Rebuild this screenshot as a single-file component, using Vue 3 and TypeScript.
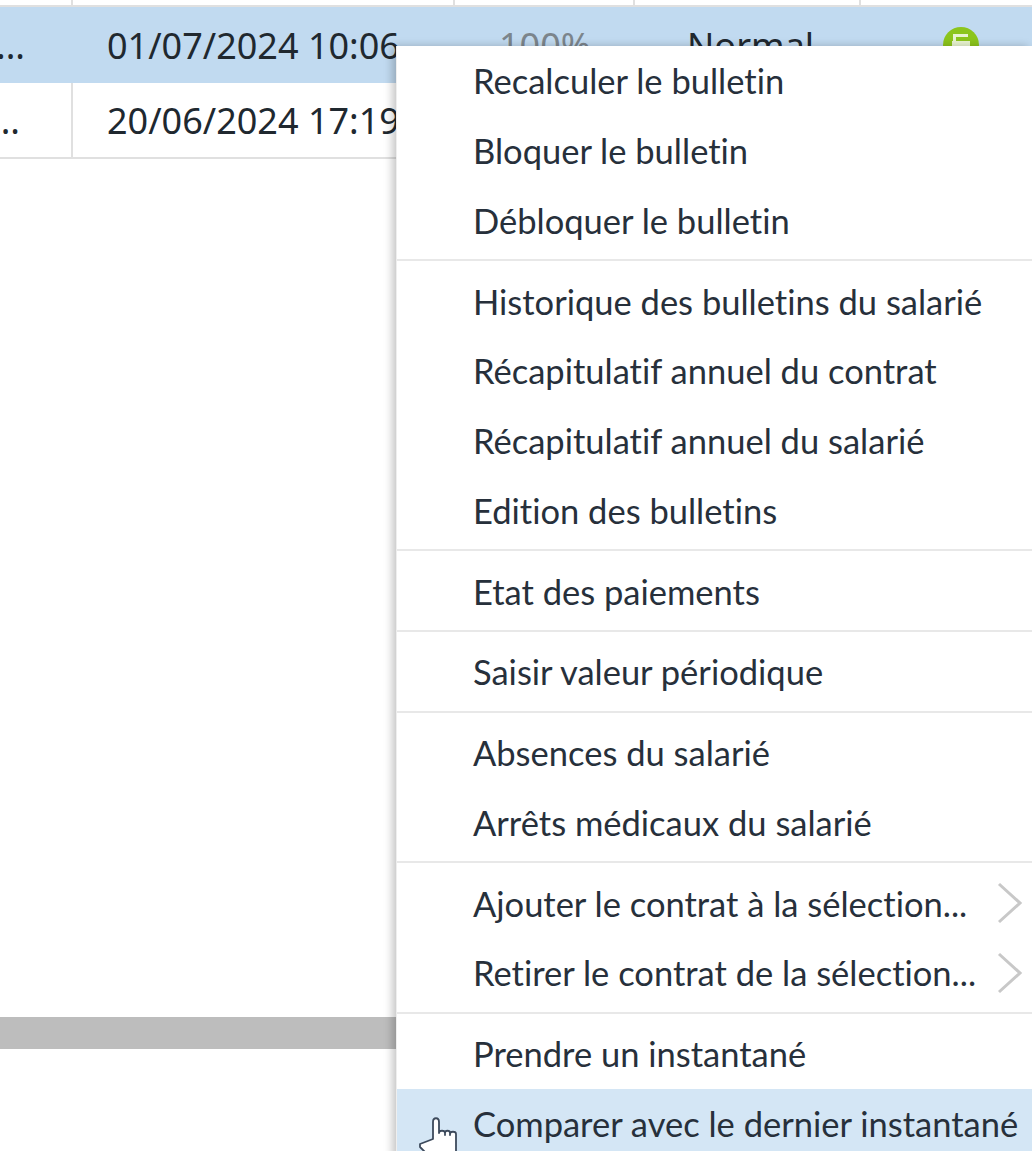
<template>
  <div class="page">
    <div class="table">
      <div class="row top">
        <div class="cell c1"></div>
        <div class="cell c2"></div>
        <div class="cell c3"></div>
        <div class="cell c4"></div>
        <div class="cell c5"></div>
      </div>
      <div class="row selected">
        <div class="cell c1"><span class="dots">...</span></div>
        <div class="cell c2">01/07/2024 10:06</div>
        <div class="cell c3 muted">100%</div>
        <div class="cell c4">Normal</div>
        <div class="cell c5">
          <svg class="status" width="38" height="38" viewBox="0 0 38 38">
            <circle cx="19" cy="19" r="18" fill="#8cc51c" />
            <path d="M11 8h15v3H14v4h14v10H10V15h1z" fill="#e8f4d0" />
          </svg>
        </div>
      </div>
      <div class="row second">
        <div class="cell c1"><span class="dots">...</span></div>
        <div class="cell c2">20/06/2024 17:19</div>
        <div class="cell c3"></div>
        <div class="cell c4"></div>
        <div class="cell c5"></div>
      </div>
    </div>
    <div class="scrollbar"></div>

    <ul class="menu">
      <template v-for="(group, g) in groups" :key="g">
        <li v-if="g > 0" class="sep"></li>
        <li
          v-for="item in group"
          :key="item.label"
          class="item"
          :class="{ hover: item.hover }"
        >
          <span>{{ item.label }}</span>
          <svg v-if="item.sub" class="chevron" width="26" height="42" viewBox="0 0 26 42">
            <path d="M2 2l21 19L2 40" fill="none" stroke="#c8c8c8" stroke-width="3" />
          </svg>
          <svg v-if="item.hover" class="cursor" width="44" height="44" viewBox="0 0 44 44">
            <path
              d="M4 33L17 28V11c0-5 6-5 6 0V22c0-3 6-3 6 0v2V22c0-3 5-3 5 0v2V23c0-3 6-3 6 0V44H12L4 36z"
              fill="#fff"
              stroke="#3d4a5c"
              stroke-width="1.8"
              stroke-linejoin="round"
            />
          </svg>
        </li>
      </template>
    </ul>
  </div>
</template>

<script setup lang="ts">
interface MenuItem {
  label: string;
  sub?: boolean;
  hover?: boolean;
}

const groups: MenuItem[][] = [
  [
    { label: 'Recalculer le bulletin' },
    { label: 'Bloquer le bulletin' },
    { label: 'Débloquer le bulletin' }
  ],
  [
    { label: 'Historique des bulletins du salarié' },
    { label: 'Récapitulatif annuel du contrat' },
    { label: 'Récapitulatif annuel du salarié' },
    { label: 'Edition des bulletins' }
  ],
  [{ label: 'Etat des paiements' }],
  [{ label: 'Saisir valeur périodique' }],
  [
    { label: 'Absences du salarié' },
    { label: 'Arrêts médicaux du salarié' }
  ],
  [
    { label: 'Ajouter le contrat à la sélection...', sub: true },
    { label: 'Retirer le contrat de la sélection...', sub: true }
  ],
  [
    { label: 'Prendre un instantané' },
    { label: 'Comparer avec le dernier instantané', hover: true }
  ]
];
</script>

<style>
html,
body {
  margin: 0;
  background: #fff;
}
</style>

<style scoped>
.page {
  position: relative;
  width: 1032px;
  height: 1151px;
  overflow: hidden;
  background: #fff;
  font-family: 'Noto Sans', sans-serif;
  font-size: 36px;
  color: #20282f;
}

.row {
  display: grid;
  grid-template-columns: 73px 382px 180px 226px 1fr;
  height: 76px;
  border-bottom: 2px solid #e0e0e0;
  box-sizing: border-box;
}

.row.top {
  height: 7px;
}

.row.selected {
  background: #c1daf0;
  border-bottom: none;
  height: 76px;
}

.cell {
  display: flex;
  align-items: center;
  box-sizing: border-box;
  border-right: 2px solid #e0e0e0;
  white-space: nowrap;
  overflow: hidden;
}

.selected .cell {
  border-right: none;
}

.c1 {
  justify-content: flex-end;
  padding-right: 48px;
}

.second .c1 {
  padding-right: 51px;
}

.c2 {
  padding-left: 34px;
}

.c3 {
  padding-left: 44px;
}

.c4 {
  padding-left: 52px;
}

.c5 {
  border-right: none;
  padding-left: 81px;
}

.muted {
  color: #7c858c;
}

.scrollbar {
  height: 32px;
  margin-top: 858px;
  background: #bdbdbd;
}

.menu {
  position: absolute;
  left: 396px;
  top: 46px;
  width: 636px;
  margin: 0;
  padding: 0;
  list-style: none;
  background: #fff;
  box-sizing: border-box;
  border-left: 1px solid #eeeeee;
  box-shadow: -4px 0 8px rgba(0, 0, 0, 0.22);
  font-family: Lato, 'Noto Sans', sans-serif;
  font-size: 34.5px;
  font-variant-ligatures: none;
  color: #27303b;
}

.item {
  position: relative;
  display: flex;
  align-items: center;
  height: 69.75px;
  padding-left: 76px;
  white-space: nowrap;
}

.item.hover {
  background: #d4e6f5;
}

.sep {
  height: 2px;
  margin: 4px 0 5px;
  background: #e8e8e8;
}

.chevron {
  position: absolute;
  left: 600px;
  top: 14px;
}

.cursor {
  position: absolute;
  left: 19px;
  top: 22px;
}
</style>
